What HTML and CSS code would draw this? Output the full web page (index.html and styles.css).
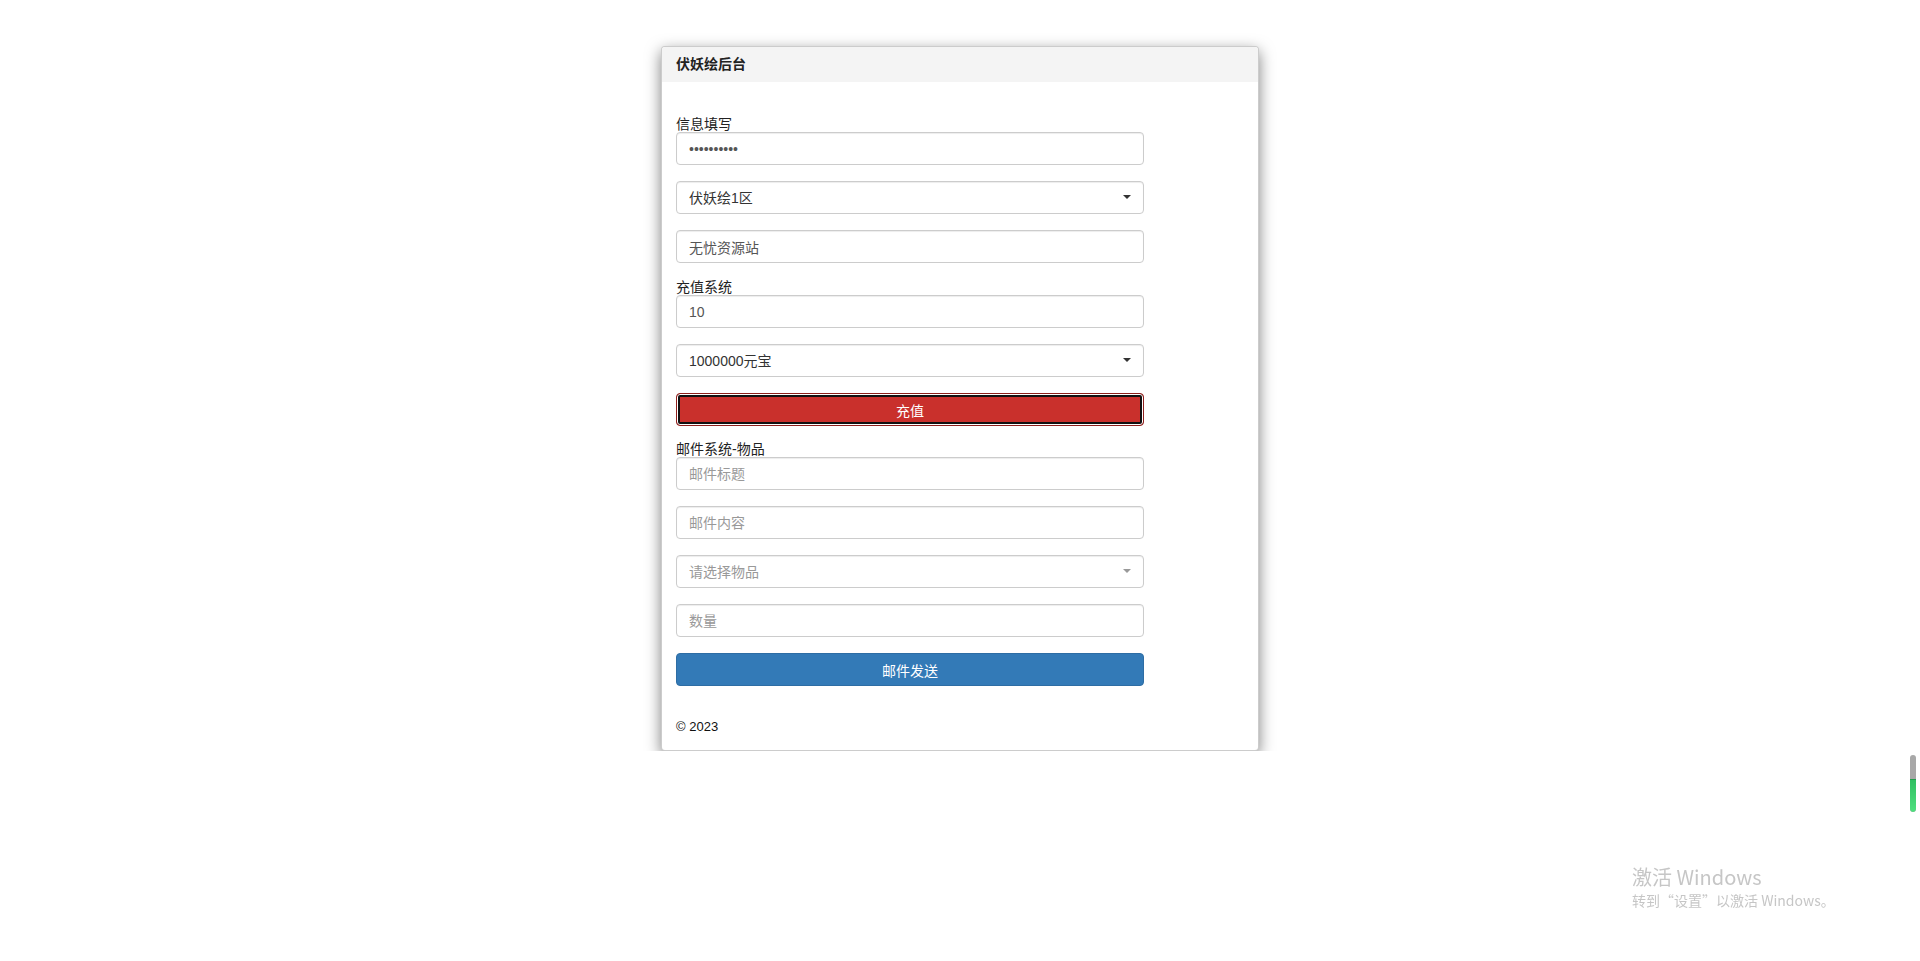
FILE: index.html
```html
<!DOCTYPE html>
<html lang="zh-CN">
<head>
<meta charset="utf-8">
<title>伏妖绘后台</title>
<link rel="stylesheet" href="styles.css">
</head>
<body>
<div class="page">
  <div class="card">
    <div class="card-header">伏妖绘后台</div>
    <div class="card-body">
      <form class="form">
        <label class="label">信息填写</label>
        <input class="field" type="password" value="1234567890">
        <div class="select-wrap">
          <select class="field select"><option>伏妖绘1区</option></select>
        </div>
        <input class="field" type="text" value="无忧资源站">

        <label class="label">充值系统</label>
        <input class="field" type="text" value="10">
        <div class="select-wrap">
          <select class="field select"><option>1000000元宝</option></select>
        </div>
        <button type="button" class="btn btn-danger">充值</button>

        <label class="label">邮件系统-物品</label>
        <input class="field" type="text" placeholder="邮件标题">
        <input class="field" type="text" placeholder="邮件内容">
        <div class="select-wrap placeholder">
          <select class="field select muted"><option>请选择物品</option></select>
        </div>
        <input class="field" type="text" placeholder="数量">
        <button type="button" class="btn btn-primary">邮件发送</button>
      </form>
      <div class="footer">© 2023</div>
    </div>
  </div>
</div>

<div class="scroll-indicator"><div class="scroll-fill"></div></div>

<div class="activate">
  <div class="activate-title">激活 Windows</div>
  <div class="activate-sub">转到“设置”以激活 Windows。</div>
</div>
</body>
</html>
```

FILE: styles.css
```css
* { box-sizing: border-box; }

html, body {
  margin: 0;
  padding: 0;
  background: #fff;
  font-family: "Liberation Sans", Arial, "Noto Sans CJK SC", sans-serif;
  font-size: 14px;
  color: #333;
}

.page {
  display: flex;
  justify-content: center;
  padding-top: 46px;
}

.card {
  width: 598px;
  background: #fff;
  border: 1px solid rgba(0, 0, 0, 0.2);
  border-radius: 4px;
  box-shadow: 0 5px 15px rgba(0, 0, 0, 0.5);
}

.card-header {
  height: 35px;
  line-height: 35px;
  padding: 0 14px;
  background: #f4f4f4;
  font-weight: bold;
  font-size: 14px;
  color: #222;
  border-radius: 3px 3px 0 0;
}

.card-body {
  padding: 34px 14px 15px;
}

.form {
  width: 468px;
  display: flex;
  flex-direction: column;
}

.label {
  display: block;
  font-size: 14px;
  line-height: 16px;
  height: 16px;
  color: #222;
}

.field {
  display: block;
  width: 100%;
  height: 33px;
  margin: 0 0 16px;
  padding: 6px 12px;
  font-family: "Liberation Sans", Arial, "Noto Sans CJK SC", sans-serif;
  font-size: 14px;
  color: #555;
  background: #fff;
  border: 1px solid #ccc;
  border-radius: 4px;
  box-shadow: inset 0 1px 1px rgba(0, 0, 0, 0.075);
  outline: none;
}

.field::placeholder { color: #999; }

.select-wrap {
  position: relative;
}

.select {
  appearance: none;
  -webkit-appearance: none;
  color: #333;
}

.select.muted { color: #999; }

.select-wrap::after {
  content: "";
  position: absolute;
  right: 13px;
  top: 14px;
  width: 0;
  height: 0;
  border-left: 4px solid transparent;
  border-right: 4px solid transparent;
  border-top: 4px solid #333;
  pointer-events: none;
}

.select-wrap.placeholder::after { border-top-color: #999; }

.btn {
  display: block;
  width: 100%;
  height: 33px;
  margin: 0 0 15px;
  padding: 0;
  font-family: "Liberation Sans", Arial, "Noto Sans CJK SC", sans-serif;
  font-size: 14px;
  color: #fff;
  border-radius: 4px;
  cursor: pointer;
}

.btn-danger {
  background: #c9302c;
  border: 1px solid #8f1f1c;
  box-shadow: inset 0 0 0 1px #fff, inset 0 0 0 3px #111;
  border-radius: 4px;
}

.btn-primary {
  background: #337ab7;
  border: 1px solid #2e6da4;
  margin-bottom: 0;
}

.footer {
  margin-top: 33px;
  font-size: 13px;
  line-height: 16px;
  color: #111;
}

.scroll-indicator {
  position: fixed;
  left: 1910px;
  top: 755px;
  width: 6px;
  height: 57px;
  border-radius: 3px;
  background: #a8a8a8;
  overflow: hidden;
  display: flex;
  flex-direction: column;
  justify-content: flex-end;
}

.scroll-fill {
  height: 33px;
  background: linear-gradient(#2fbf62, #4fe07f);
  border-top: 1px solid #1f9e4c;
  border-radius: 0 0 3px 3px;
}

.activate {
  position: fixed;
  left: 1632px;
  top: 863px;
  color: #c6c6c6;
  font-family: "Noto Sans CJK SC", "Open Sans", sans-serif;
}

.activate-title {
  font-size: 20px;
  line-height: 27px;
}

.activate-sub {
  font-size: 14px;
  line-height: 20px;
}
```
